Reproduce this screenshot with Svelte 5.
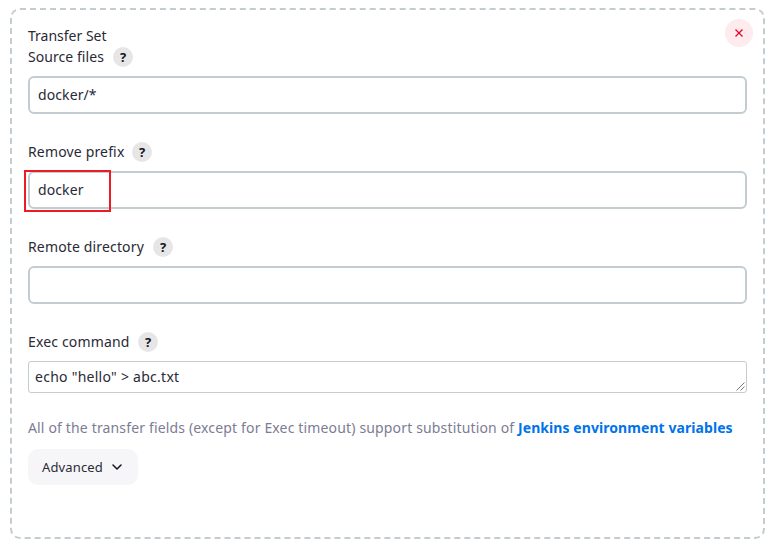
<script>
  const fields = [
    { label: 'Source files', width: 76, spacing: 0.06, value: 'docker/*' },
    { label: 'Remove prefix', width: 95, spacing: 0.16, value: 'docker', marked: true },
    { label: 'Remote directory', width: 116, spacing: 0.15, value: '' }
  ];
</script>

{#snippet heading(label, width, spacing)}
  <div class="heading">
    <span class="label" style="width: {width}px; letter-spacing: {spacing}px">{label}</span>
    <span class="help">?</span>
  </div>
{/snippet}

<main class="set">
  <button class="close" aria-label="Remove">
    <svg width="10" height="10" viewBox="0 0 10 10"><path d="M1.5 1.5 8.5 8.5M8.5 1.5 1.5 8.5" /></svg>
  </button>
  <div class="title">Transfer Set</div>
  {#each fields as field}
    <section class="field">
      {@render heading(field.label, field.width, field.spacing)}
      <div class="input">
        <span>{field.value}</span>
        {#if field.marked}<i class="mark"></i>{/if}
      </div>
    </section>
  {/each}
  <section class="exec">
    {@render heading('Exec command', 101, 0.16)}
    <div class="area">
      <span>echo "hello" &gt; abc.txt</span>
      <svg class="grip" width="9" height="9" viewBox="0 0 9 9"><path d="M.5 8.5l8-8M4.5 8.5l4-4" /></svg>
    </div>
  </section>
  <p class="note"><span>All of the transfer fields (except for Exec timeout) support substitution of</span> <a href="#variables">Jenkins environment variables</a></p>
  <button class="advanced">
    <span>Advanced</span>
    <svg width="10" height="6" viewBox="0 0 10 6"><path d="M1 1l4 4 4-4" /></svg>
  </button>
</main>

<style>
  :global(body) { background: #fff; }
  :global(#app) { display: flow-root; }
  .set, .set * { box-sizing: border-box; }
  .set {
    position: relative;
    width: 755px;
    height: 531px;
    margin: 8px 0 0 10px;
    padding: 16px 16px 0;
    border: 2px dashed #c3ccd1;
    border-radius: 10px;
    color: #2a2a35;
    font: 14px/20px "Noto Sans", "Open Sans", sans-serif;
    white-space: nowrap;
  }
  button { border: 0; padding: 0; font: inherit; color: inherit; }
  svg { display: block; fill: none; stroke: currentColor; flex: none; }
  .close {
    position: absolute;
    top: 9px;
    right: 10px;
    width: 28px;
    height: 28px;
    display: grid;
    place-items: center;
    border-radius: 50%;
    background: #fdebed;
    color: #e6002a;
  }
  .close path { stroke-width: 1.2; }
  .title { height: 21px; }
  .field { height: 95px; }
  .heading { display: flex; align-items: center; gap: 9px; height: 20px; }
  .label { flex: none; }
  .help {
    width: 20px;
    height: 20px;
    border-radius: 50%;
    background: #e6e6e6;
    color: #14141f;
    text-align: center;
    font-size: 13px;
    font-weight: 700;
  }
  .input {
    position: relative;
    display: flex;
    align-items: center;
    height: 38px;
    margin-top: 9px;
    padding: 0 8px;
    border: 2px solid #c3cdd1;
    border-radius: 6px;
    letter-spacing: 0.1px;
  }
  .mark {
    position: absolute;
    left: -6px;
    top: -3px;
    width: 87px;
    height: 42px;
    border: 2px solid #ed1c24;
  }
  .area {
    position: relative;
    height: 32px;
    margin-top: 9px;
    padding: 5px 6px;
    border: 1px solid #c3cdd1;
    border-radius: 3px;
    letter-spacing: 0.26px;
  }
  .grip { position: absolute; right: 1px; bottom: 1px; color: #555; }
  .grip path { stroke-width: 0.8; }
  .note { margin: 25px 0 0; height: 20px; color: #7c7c94; letter-spacing: 0.155px; }
  a { color: #0073ea; font-weight: 700; text-decoration: none; letter-spacing: 0.07px; }
  .advanced {
    display: flex;
    align-items: center;
    gap: 9px;
    width: 110px;
    height: 36px;
    margin-top: 11px;
    padding-left: 14px;
    border-radius: 10px;
    background: #f6f6f8;
    font-size: 13px;
    letter-spacing: 0.15px;
  }
  .advanced path { stroke: #14141f; stroke-width: 1.5; stroke-linecap: round; stroke-linejoin: round; }
</style>
